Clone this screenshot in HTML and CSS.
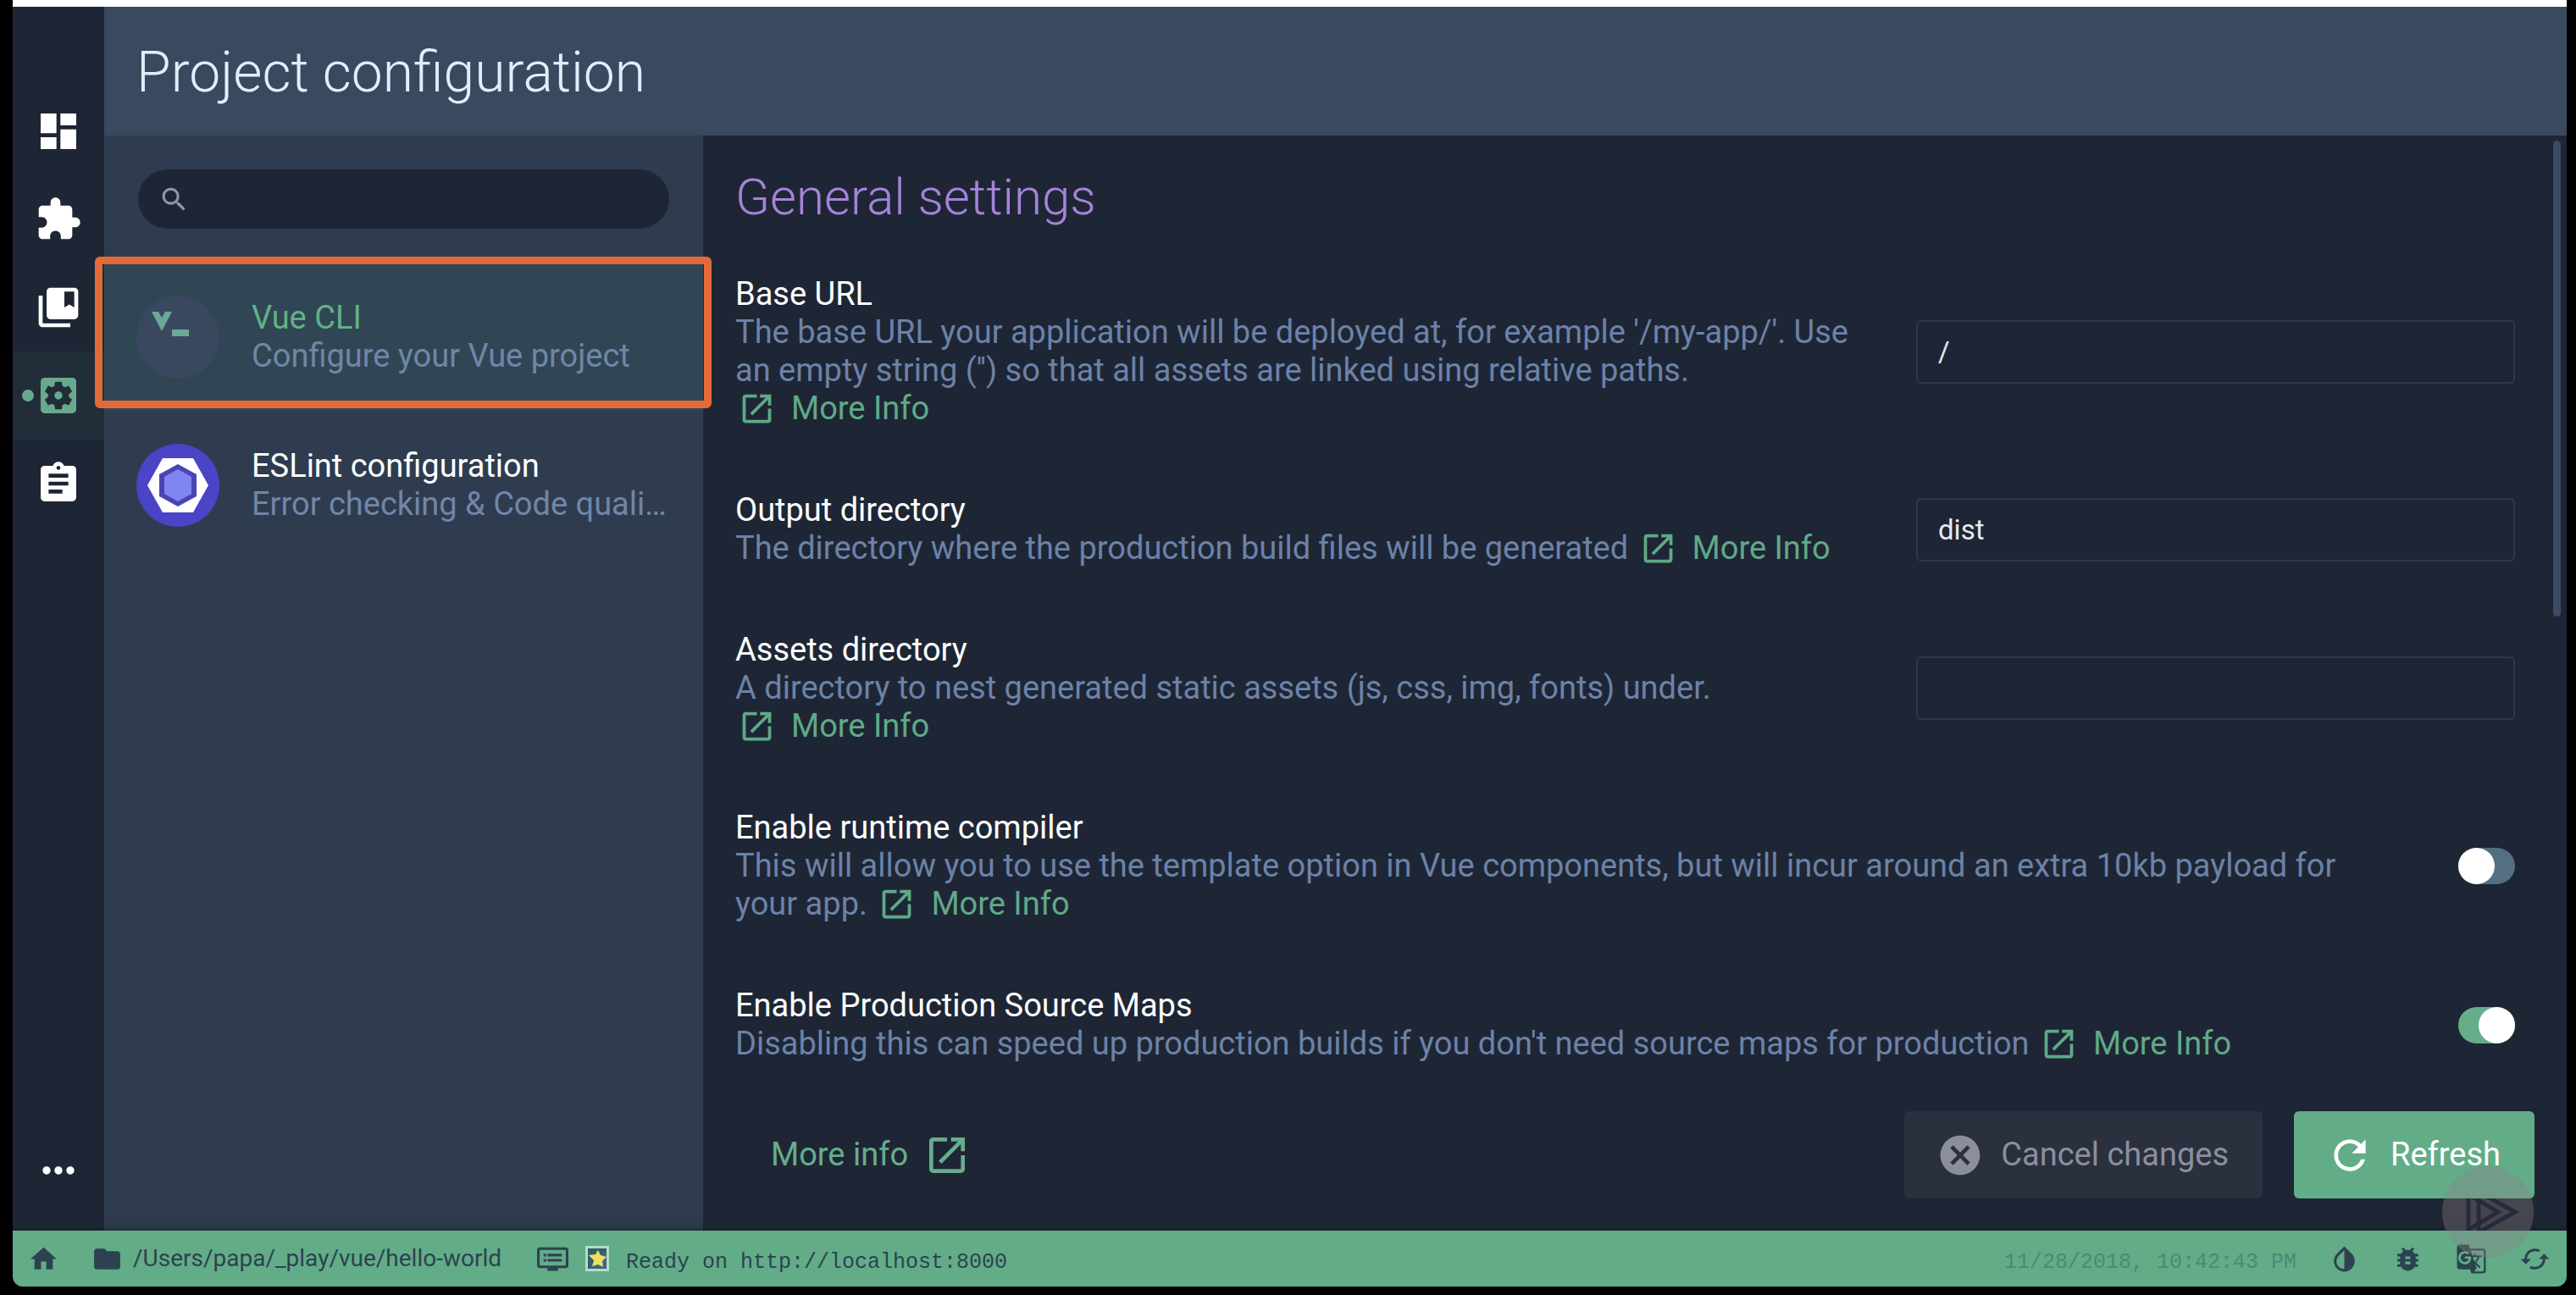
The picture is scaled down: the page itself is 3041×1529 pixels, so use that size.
FILE: index.html
```html
<!DOCTYPE html>
<html lang="en">
<head>
<meta charset="utf-8">
<title>Project configuration</title>
<link rel="stylesheet" href="styles.css">
</head>
<body>
<svg class="defs" aria-hidden="true">
  <symbol id="i-open" viewBox="0 0 24 24"><path d="M19 19H5V5h7V3H5c-1.100 0-2 .9-2 2v14c0 1.100.9 2 2 2h14c1.100 0 2-.9 2-2v-7h-2v7zM14 3v2h3.590l-9.830 9.830 1.410 1.410L19 6.410V10h2V3h-7z"/></symbol>
</svg>
<div class="window">
  <div class="main">
    <nav class="rail" aria-label="Views">
      <a class="rail-item" href="#dashboard" aria-label="Dashboard"><svg viewBox="0 0 24 24"><path d="M3 13h8V3H3v10zm0 8h8v-6H3v6zm10 0h8V11h-8v10zm0-18v6h8V3h-8z"/></svg></a>
      <a class="rail-item" href="#plugins" aria-label="Plugins"><svg viewBox="0 0 24 24"><path d="M20.500 11H19V7c0-1.100-.9-2-2-2h-4V3.500C13 2.120 11.880 1 10.500 1S8 2.120 8 3.500V5H4c-1.100 0-1.990.9-1.990 2v3.800H3.500c1.490 0 2.700 1.210 2.700 2.700s-1.210 2.700-2.700 2.700H2V20c0 1.100.9 2 2 2h3.800v-1.500c0-1.490 1.210-2.700 2.700-2.700 1.490 0 2.700 1.210 2.700 2.700V22H17c1.100 0 2-.9 2-2v-4h1.500c1.380 0 2.500-1.120 2.500-2.500S21.880 11 20.500 11z"/></svg></a>
      <a class="rail-item" href="#dependencies" aria-label="Dependencies"><svg viewBox="0 0 24 24"><path d="M4 6H2v14c0 1.100.9 2 2 2h14v-2H4V6z"/><path d="M20 2H8c-1.100 0-2 .9-2 2v12c0 1.100.9 2 2 2h12c1.100 0 2-.9 2-2V4c0-1.100-.9-2-2-2zm0 10l-2.500-1.500L15 12V4h5v8z"/></svg></a>
      <a class="rail-item active" href="#configuration" aria-label="Configuration"><svg viewBox="0 0 24 24"><path d="M12 10c-1.100 0-2 .9-2 2s.9 2 2 2 2-.9 2-2-.9-2-2-2zm7-7H5c-1.110 0-2 .9-2 2v14c0 1.100.89 2 2 2h14c1.110 0 2-.9 2-2V5c0-1.100-.89-2-2-2zm-1.750 9c0 .23-.02.46-.05.68l1.480 1.160c.13.110.170.3.080.450l-1.400 2.420c-.09.150-.27.210-.43.150l-1.740-.7c-.36.280-.76.510-1.180.690l-.26 1.850c-.03.170-.18.3-.35.3h-2.800c-.17 0-.32-.13-.35-.29l-.26-1.850c-.43-.18-.82-.41-1.180-.69l-1.740.7c-.16.060-.34 0-.43-.15l-1.400-2.420c-.09-.15-.05-.34.08-.45l1.480-1.160c-.03-.23-.05-.46-.05-.69 0-.23.02-.46.05-.68l-1.480-1.160c-.13-.11-.17-.3-.08-.45l1.400-2.420c.09-.15.27-.21.43-.15l1.740.7c.36-.28.76-.51 1.180-.69l.26-1.850c.03-.17.18-.3.350-.3h2.800c.17 0 .32.13.350.29l.26 1.850c.43.180.82.410 1.180.69l1.740-.7c.16-.06.34 0 .43.150l1.400 2.420c.09.150.05.340-.08.450l-1.480 1.160c.03.230.05.460.05.690z"/></svg></a>
      <a class="rail-item" href="#tasks" aria-label="Tasks"><svg viewBox="0 0 24 24"><path d="M19 3h-4.180C14.400 1.840 13.300 1 12 1c-1.300 0-2.400.84-2.820 2H5c-1.100 0-2 .9-2 2v14c0 1.100.9 2 2 2h14c1.100 0 2-.9 2-2V5c0-1.100-.9-2-2-2zm-7 0c.55 0 1 .45 1 1s-.45 1-1 1-1-.45-1-1 .45-1 1-1zm2 14H7v-2h7v2zm3-4H7v-2h10v2zm0-4H7V7h10v2z"/></svg></a>
      <button class="rail-item rail-more" type="button" aria-label="More"><svg viewBox="0 0 24 24"><path d="M6 10c-1.100 0-2 .9-2 2s.9 2 2 2 2-.9 2-2-.9-2-2-2zm12 0c-1.100 0-2 .9-2 2s.9 2 2 2 2-.9 2-2-.9-2-2-2zm-6 0c-1.100 0-2 .9-2 2s.9 2 2 2 2-.9 2-2-.9-2-2-2z"/></svg></button>
    </nav>
    <div class="view">
      <header class="view-header"><h1>Project configuration</h1></header>
      <div class="view-body">
        <aside class="list">
          <label class="search">
            <svg viewBox="0 0 24 24"><path d="M15.500 14h-.79l-.28-.27C15.410 12.590 16 11.110 16 9.500 16 5.910 13.090 3 9.500 3S3 5.910 3 9.500 5.910 16 9.500 16c1.610 0 3.090-.59 4.230-1.570l.27.280v.79l5 4.990L20.490 19l-4.990-5zm-6 0C7.010 14 5 11.990 5 9.500S7.010 5 9.500 5 14 7.010 14 9.500 11.990 14 9.500 14z"/></svg>
            <input type="search" aria-label="Search configurations">
          </label>
          <a class="item selected" href="#vue-cli">
            <svg class="logo" viewBox="0 0 98 98"><circle cx="49" cy="49" r="49" fill="#39475f"/><path d="M18 19h8l4 7 4-7h8L30 42zM42 40h20v8H42z" fill="#6ba896"/></svg>
            <span class="item-text"><span class="item-name">Vue CLI</span><span class="item-desc">Configure your Vue project</span></span>
          </a>
          <a class="item" href="#eslint">
            <svg class="logo" viewBox="0 0 98 98"><circle cx="49" cy="49" r="49" fill="#4a44c6"/><path d="M13 49l18-32h36l18 32-18 32H31z" fill="#fff"/><path d="M49 24l22 12v26L49 74 27 62V36z" fill="#4a45b4"/><path d="M49 30l16 9v20l-16 9-16-9V39z" fill="#8085f2"/></svg>
            <span class="item-text"><span class="item-name">ESLint configuration</span><span class="item-desc">Error checking &amp; Code quality</span></span>
          </a>
        </aside>
        <main class="content">
          <form class="settings">
            <h2>General settings</h2>
            <div class="row">
              <div class="info"><label for="base">Base URL</label><p>The base URL your application will be deployed at, for example '/my-app/'. Use an empty string ('') so that all assets are linked using relative paths. <a class="more" href="#base-url"><svg><use href="#i-open"/></svg>More Info</a></p></div>
              <input class="field" id="base" type="text" value="/">
            </div>
            <div class="row">
              <div class="info"><label for="out">Output directory</label><p>The directory where the production build files will be generated <a class="more" href="#output"><svg><use href="#i-open"/></svg>More Info</a></p></div>
              <input class="field" id="out" type="text" value="dist">
            </div>
            <div class="row">
              <div class="info"><label for="assets">Assets directory</label><p>A directory to nest generated static assets (js, css, img, fonts) under. <a class="more" href="#assets-dir"><svg><use href="#i-open"/></svg>More Info</a></p></div>
              <input class="field" id="assets" type="text">
            </div>
            <div class="row">
              <div class="info"><label for="runtime">Enable runtime compiler</label><p>This will allow you to use the template option in Vue components, but will incur around an extra 10kb payload for your app. <a class="more" href="#runtime-compiler"><svg><use href="#i-open"/></svg>More Info</a></p></div>
              <input class="switch" id="runtime" type="checkbox" role="switch">
            </div>
            <div class="row">
              <div class="info"><label for="maps">Enable Production Source Maps</label><p>Disabling this can speed up production builds if you don't need source maps for production <a class="more" href="#source-maps"><svg><use href="#i-open"/></svg>More Info</a></p></div>
              <input class="switch" id="maps" type="checkbox" role="switch" checked>
            </div>
          </form>
          <div class="scrollbar"></div>
          <footer class="actions">
            <a class="info-link" href="#more-info">More info<svg><use href="#i-open"/></svg></a>
            <button class="btn cancel" type="button" disabled><svg viewBox="0 0 24 24"><path d="M12 2C6.470 2 2 6.470 2 12s4.470 10 10 10 10-4.470 10-10S17.530 2 12 2zm5 13.590L15.590 17 12 13.410 8.410 17 7 15.590 10.590 12 7 8.410 8.410 7 12 10.590 15.590 7 17 8.410 13.410 12 17 15.590z"/></svg>Cancel changes</button>
            <button class="btn refresh" type="button"><svg viewBox="0 0 24 24"><path d="M17.650 6.350C16.200 4.900 14.210 4 12 4c-4.420 0-7.990 3.580-7.990 8s3.570 8 7.990 8c3.730 0 6.840-2.550 7.730-6h-2.080c-.82 2.330-3.040 4-5.650 4-3.310 0-6-2.690-6-6s2.690-6 6-6c1.660 0 3.140.69 4.220 1.780L13 11h7V4l-2.350 2.350z"/></svg>Refresh</button>
          </footer>
        </main>
      </div>
    </div>
  </div>
  <div class="status">
    <a class="status-icon home" href="#home" aria-label="Projects"><svg viewBox="0 0 24 24"><path d="M10 20v-6h4v6h5v-8h3L12 3 2 12h3v8z"/></svg></a>
    <div class="path"><svg viewBox="0 0 24 24"><path d="M10 4H4c-1.100 0-1.990.9-1.990 2L2 18c0 1.100.9 2 2 2h16c1.100 0 2-.9 2-2V8c0-1.100-.9-2-2-2h-8l-2-2z"/></svg>/Users/papa/_play/vue/hello-world</div>
    <div class="log"><svg viewBox="0 0 24 24"><path d="M22 3H2c-1.100 0-2 .9-2 2v12c0 1.100.9 2 2 2h6v2h8v-2h6c1.100 0 2-.9 2-2V5c0-1.100-.9-2-2-2zm0 14H2V5h20v12zM19 8H8v2h11V8zm0 4H8v2h11v-2zM7 8H5v2h2V8zm0 4H5v2h2v-2z"/></svg>
      <svg class="emoji" viewBox="0 0 28 30"><path d="M0 0h28v30H0z" fill="#b4dccb"/><path d="M3 3h22v24H3z" fill="#315f6b"/><path d="M3 27L25 5v22z" fill="#3f6285"/><path d="M15 5l3 6 7 2-5 5 1 7-6-3-7 2 2-7-6-6 8-1z" fill="#efdd61"/></svg>
      <span class="mono">Ready on http://localhost:8000</span></div>
    <time class="mono date">11/28/2018, 10:42:43 PM</time>
    <button class="status-icon" type="button" aria-label="Toggle theme"><svg viewBox="0 0 24 24"><path d="M17.660 8L12 2.350 6.340 8C4.780 9.560 4 11.640 4 13.640s.78 4.110 2.340 5.670 3.610 2.350 5.660 2.350 4.100-.79 5.660-2.350S20 15.640 20 13.640 19.220 9.560 17.660 8zM6 14c.01-2 .62-3.270 1.760-4.400L12 5.270v14.400c-3.500 0-6-2.500-6-5.670z"/></svg></button>
    <button class="status-icon" type="button" aria-label="Report a bug"><svg viewBox="0 0 24 24"><path d="M20 8h-2.810c-.45-.78-1.070-1.450-1.820-1.960L17 4.410 15.590 3l-2.170 2.170C12.960 5.060 12.490 5 12 5s-.96.060-1.410.17L8.410 3 7 4.410l1.620 1.630C7.880 6.550 7.260 7.220 6.810 8H4v2h2.090c-.05.33-.09.66-.09 1v1H4v2h2v1c0 .34.04.67.09 1H4v2h2.810c1.040 1.790 2.970 3 5.190 3s4.150-1.210 5.190-3H20v-2h-2.090c.05-.33.09-.66.09-1v-1h2v-2h-2v-1c0-.34-.04-.67-.09-1H20V8zm-6 8h-4v-2h4v2zm0-4h-4v-2h4v2z"/></svg></button>
    <button class="status-icon" type="button" aria-label="Translate"><svg viewBox="0 0 24 24"><path d="M21 4H11l-1-3H3c-1.100 0-2 .9-2 2v15c0 1.100.9 2 2 2h8l1 3h9c1.100 0 2-.9 2-2V6c0-1.100-.9-2-2-2zM7 16c-2.760 0-5-2.240-5-5s2.240-5 5-5c1.350 0 2.480.5 3.350 1.300L9.030 8.570c-.38-.36-1.040-.78-2.030-.78-1.740 0-3.150 1.440-3.150 3.210S5.260 14.210 7 14.210c2.010 0 2.840-1.440 2.920-2.410H7v-1.710h4.680c.07.310.12.610.12 1.020C11.800 13.970 9.890 16 7 16zm6.170-5.420h3.700c-.43 1.250-1.110 2.430-2.050 3.470-.31-.35-.6-.72-.86-1.100l-.79-2.370zm8.330 9.920c0 .55-.45 1-1 1H14l2-2.500-1.040-3.100 3.100 3.100.92-.92-3.300-3.250.02-.02c1.130-1.250 1.930-2.690 2.400-4.220H20v-1.300h-4.530V8h-1.290v1.290h-1.440L11.460 5.500h9.040c.55 0 1 .45 1 1v14z"/></svg></button>
    <button class="status-icon" type="button" aria-label="Reload"><svg viewBox="0 0 24 24"><path d="M19 8l-4 4h3c0 3.310-2.690 6-6 6-1.010 0-1.970-.25-2.800-.7l-1.460 1.460C8.970 19.540 10.430 20 12 20c4.420 0 8-3.580 8-8h3l-4-4zM6 12c0-3.310 2.690-6 6-6 1.010 0 1.970.25 2.800.7l1.460-1.460C15.030 4.460 13.570 4 12 4c-4.420 0-8 3.580-8 8H1l4 4 4-4H6z"/></svg></button>
  </div>
  <svg class="watermark" viewBox="0 0 109 109" aria-hidden="true">
    <clipPath id="play-band"><path d="M0 38h109v38H0z"/></clipPath>
    <circle cx="54" cy="54" r="54" fill="#8c8084" fill-opacity=".36"/>
    <path d="M31 33v42l35-21zM43 30v48l43-24z" fill="none" stroke="#1f2433" stroke-opacity=".8" stroke-width="5" clip-path="url(#play-band)"/>
  </svg>
</div>
</body>
</html>
```
FILE: styles.css
```css
* { box-sizing: border-box; }

html, body { height: 100%; }

body {
  margin: 0;
  padding: 0 11px 10px 15px;
  background: #000;
  color: #fff;
  font: 38px/45px Roboto, sans-serif;
}

a { color: inherit; text-decoration: none; }
button { border: 0; background: none; font: inherit; color: inherit; }
svg { fill: currentColor; flex: none; }
.defs { display: none; }

.window {
  position: relative;
  display: flex;
  flex-direction: column;
  height: 100%;
  border-top: 8px solid #fff;
  border-radius: 0 0 12px 12px;
  background: #1e2635;
  overflow: hidden;
}

.main { flex: 1; display: flex; min-height: 0; }

.rail {
  width: 108px;
  padding: 95px 0 19px;
  display: flex;
  flex-direction: column;
  background: #1e2635;
}

.rail-item {
  position: relative;
  display: flex;
  align-items: center;
  justify-content: center;
  height: 104px;
  padding: 0;
}

.rail-item svg { width: 56px; height: 56px; }
.rail-item.active { color: #67aa8d; background: #222d3a; }

.rail-item.active::before {
  content: "";
  position: absolute;
  left: 11px;
  width: 14px;
  height: 14px;
  border-radius: 50%;
  background: #67aa8d;
}

.rail-more { margin-top: auto; }

.view { flex: 1; min-width: 0; display: flex; flex-direction: column; }

.view-header {
  display: flex;
  align-items: center;
  height: 152px;
  padding: 4px 38px 0;
  background: #39495f;
}

h1, h2 { margin: 0; font-weight: 300; }
h1 { font-size: 66px; line-height: 76px; color: #e3edfb; }

.view-body { flex: 1; display: flex; min-height: 0; }

.list { width: 707px; background: #2f3c4f; }

.search {
  display: flex;
  align-items: center;
  gap: 12px;
  height: 70px;
  margin: 40px;
  padding: 0 24px;
  border-radius: 35px;
  background: #1e2635;
  color: #8d97ae;
}

.search svg { width: 37px; height: 37px; }

.search input {
  flex: 1;
  border: 0;
  outline: 0;
  background: none;
  color: #fff;
  font: inherit;
}

.item {
  display: flex;
  align-items: center;
  gap: 38px;
  height: 175px;
  padding: 0 41px 0 38px;
}

.item.selected {
  position: relative;
  z-index: 1;
  background: #314654;
}

.item.selected::after {
  content: "";
  position: absolute;
  inset: -7px -10px 3px -11px;
  border: 9px solid #e36a38;
  border-radius: 6px;
}

.logo { width: 98px; height: 98px; }
.item-text { min-width: 0; display: flex; flex-direction: column; }
.selected .item-name { color: #62b287; }
.item-desc { color: #7086a8; white-space: nowrap; overflow: hidden; text-overflow: ellipsis; }

.content {
  position: relative;
  flex: 1;
  min-width: 0;
  display: flex;
  flex-direction: column;
  background: #1e2635;
}

.settings {
  flex: 1;
  min-height: 0;
  overflow: hidden;
  padding: 38px 61px 0 38px;
}

h2 { font-size: 60px; line-height: 70px; color: #a583da; margin-bottom: 20px; }

.row {
  display: flex;
  align-items: center;
  gap: 72px;
  padding: 37px 0 38px;
}

.info { flex: 1; min-width: 0; }
.info label { display: block; }
.info p { margin: 0; color: #6c82a8; }

.more { color: #5faa87; white-space: nowrap; }
.more svg { width: 45px; height: 45px; margin: 0 18px 0 3px; vertical-align: bottom; }

.field {
  width: 707px;
  height: 75px;
  padding: 0 24px;
  border: 2px solid #2d394a;
  border-radius: 6px;
  outline: 0;
  background: none;
  color: #e6eaf2;
  font: 33px/45px Roboto, sans-serif;
}

.switch {
  appearance: none;
  display: flex;
  width: 67px;
  height: 43px;
  margin: 0;
  border-radius: 22px;
  background: #546f82;
}

.switch::before {
  content: "";
  width: 43px;
  height: 43px;
  border-radius: 50%;
  background: #fff;
}

.switch:checked { justify-content: flex-end; background: #66ad8a; }

.scrollbar {
  position: absolute;
  top: 6px;
  right: 7px;
  width: 9px;
  height: 562px;
  border-radius: 5px;
  background: #3c4b63;
}

.actions {
  display: flex;
  align-items: center;
  gap: 37px;
  padding: 37px 38px 38px;
}

.actions svg { width: 56px; height: 56px; }

.info-link {
  display: flex;
  align-items: center;
  gap: 18px;
  margin-right: auto;
  padding: 0 42px;
  color: #66ad8d;
}

.btn {
  display: flex;
  align-items: center;
  gap: 20px;
  height: 103px;
  padding: 0 40px 0 38px;
  border-radius: 6px;
}

.cancel { background: #2b303f; color: #8b8f9d; }
.refresh { background: #62ac88; color: #fff; }

.status {
  position: relative;
  display: flex;
  align-items: center;
  height: 66px;
  padding: 0 19px 0 18px;
  background: #62ac88;
  box-shadow: 0 -2px 8px rgba(12, 30, 26, .5);
  color: #2d4250;
  font-size: 28px;
  line-height: 34px;
}

.status svg { width: 37px; height: 37px; }
.status-icon { display: flex; padding: 0; margin-left: 38px; }
.status-icon.home { margin: 0 38px 0 0; }
.path { display: flex; align-items: center; gap: 12px; margin-right: 42px; }
.log { display: flex; align-items: center; gap: 20px; }
.status .emoji { width: 28px; height: 30px; }
.mono { font: 25px/34px "Liberation Mono", monospace; padding-top: 10px; }
.date { margin-left: auto; color: #4a8a76; }

.watermark {
  position: absolute;
  right: 38px;
  bottom: 33px;
  width: 109px;
  height: 109px;
}
```
